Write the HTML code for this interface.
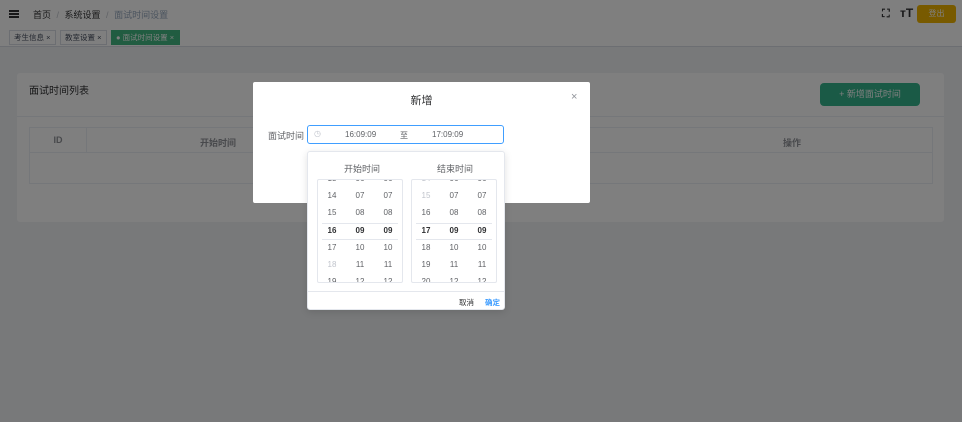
<!DOCTYPE html>
<html><head><meta charset="utf-8"><style>
*{margin:0;padding:0;box-sizing:border-box}
body{width:962px;height:422px;overflow:hidden;background:#f0f2f5;font-family:"Liberation Sans","Noto Sans CJK SC",sans-serif;position:relative;color:#303133}
.a{position:absolute}
.hdr{left:0;top:0;width:962px;height:29px;background:#fff;font-size:12px}
.tags{left:0;top:29px;width:962px;height:18px;background:#fff;border-bottom:1px solid #d8dce5}
.tag{top:1px;height:15px;border:1px solid #d8dce5;font-size:7.5px;line-height:13px;padding:0 4px;color:#495060;background:#fff}
.card{left:17px;top:73px;width:927px;height:149px;background:#fff;border-radius:3px}
.ov{left:0;top:0;width:962px;height:422px;background:rgba(0,0,0,.5)}
.dlg{left:253px;top:82px;width:337px;height:121px;background:#fff;border-radius:2px}
.pk{left:307px;top:151px;width:198px;height:159px;background:#fff;border:1px solid #e4e7ed;border-radius:3px;box-shadow:0 2px 8px rgba(0,0,0,.12)}
.col{top:27px;width:86px;height:104px;border:1px solid #e4e7ed;border-radius:2px;overflow:hidden;font-size:8px;color:#606266}
.col span{position:absolute;width:28px;text-align:center}
</style></head><body>
<div class="a hdr">
 <div class="a" style="left:9px;top:10px;width:10px;height:2px;background:#303133"></div>
 <div class="a" style="left:9px;top:13px;width:10px;height:2px;background:#303133"></div>
 <div class="a" style="left:9px;top:16px;width:10px;height:2px;background:#303133"></div>
 <div class="a" style="left:33px;top:8px;font-size:9px;color:#303133">首页 <span style="color:#c0c4cc;margin:0 3px">/</span> 系统设置 <span style="color:#c0c4cc;margin:0 3px">/</span> <span style="color:#97a8be">面试时间设置</span></div>
 <div class="a" style="left:882px;top:8px;font-size:11px;font-weight:bold">⛶</div>
 <div class="a" style="left:900px;top:6px;font-size:12px;font-weight:bold">тT</div>
 <div class="a" style="left:917px;top:5px;width:39px;height:18px;border-radius:3px;color:#fff;font-size:8px;text-align:center;line-height:18px;background:#f0b400">登出</div>
</div>
<div class="a tags">
 <div class="a tag" style="left:9px;width:47px">考生信息 ×</div>
 <div class="a tag" style="left:60px;width:47px">教室设置 ×</div>
 <div class="a tag" style="left:111px;width:69px;background:#42b983;border-color:#42b983;color:#fff">● 面试时间设置 ×</div>
</div>
<div class="a card">
 <div class="a" style="left:12px;top:9px;font-size:10px">面试时间列表</div>
 <div class="a" style="left:803px;top:10px;width:100px;height:23px;background:#35b58c;border-radius:4px;color:#fff;font-size:9px;text-align:center;line-height:23px">+ 新增面试时间</div>
 <div class="a" style="left:0;top:43px;width:927px;border-top:1px solid #ebeef5"></div>
 <div class="a" style="left:12px;top:54px;width:904px;height:57px;border:1px solid #ebeef5">
  <div class="a" style="left:0;top:0;width:902px;height:25px;border-bottom:1px solid #ebeef5;font-size:9px;font-weight:bold;color:#909399">
   <div class="a" style="left:0;top:0;width:57px;height:25px;border-right:1px solid #ebeef5;text-align:center;line-height:25px">ID</div>
   <div class="a" style="left:170px;top:8px">开始时间</div>
   <div class="a" style="left:753px;top:8px">操作</div>
  </div>
 </div>
</div>
<div class="a ov"></div>
<div class="a dlg">
 <div class="a" style="left:0;top:10px;width:337px;text-align:center;font-size:11px">新增</div>
 <div class="a" style="left:318px;top:9px;font-size:11px;color:#909399">×</div>
 <div class="a" style="left:15px;top:47px;font-size:9px;color:#606266">面试时间</div>
 <div class="a" style="left:54px;top:43px;width:197px;height:19px;border:1px solid #409eff;border-radius:3px;font-size:8px;color:#606266">
  <span class="a" style="left:6px;top:3px;color:#c0c4cc">◷</span>
  <span class="a" style="left:37px;top:4px">16:09:09</span>
  <span class="a" style="left:92px;top:4px">至</span>
  <span class="a" style="left:124px;top:4px">17:09:09</span>
 </div>
</div>
<div class="a pk">
 <div class="a" style="left:36px;top:10px;font-size:9px;color:#606266">开始时间</div>
 <div class="a" style="left:129px;top:10px;font-size:9px;color:#606266">结束时间</div>
 <div class="a col" style="left:9px">
  <div class="a" style="left:4px;top:43px;width:76px;height:17px;border-top:1px solid #e4e7ed;border-bottom:1px solid #e4e7ed"></div>
  <span style="left:0;top:-6px">13</span><span style="left:28px;top:-6px">06</span><span style="left:56px;top:-6px">06</span>
  <span style="left:0;top:11px">14</span><span style="left:28px;top:11px">07</span><span style="left:56px;top:11px">07</span>
  <span style="left:0;top:28px">15</span><span style="left:28px;top:28px">08</span><span style="left:56px;top:28px">08</span>
  <span style="left:0;top:46px;font-weight:bold;color:#303133">16</span><span style="left:28px;top:46px;font-weight:bold;color:#303133">09</span><span style="left:56px;top:46px;font-weight:bold;color:#303133">09</span>
  <span style="left:0;top:63px">17</span><span style="left:28px;top:63px">10</span><span style="left:56px;top:63px">10</span>
  <span style="left:0;top:80px;color:#c0c4cc">18</span><span style="left:28px;top:80px">11</span><span style="left:56px;top:80px">11</span>
  <span style="left:0;top:97px">19</span><span style="left:28px;top:97px">12</span><span style="left:56px;top:97px">12</span>
 </div>
 <div class="a col" style="left:103px">
  <div class="a" style="left:4px;top:43px;width:76px;height:17px;border-top:1px solid #e4e7ed;border-bottom:1px solid #e4e7ed"></div>
  <span style="left:0;top:-6px;color:#c0c4cc">14</span><span style="left:28px;top:-6px">06</span><span style="left:56px;top:-6px">06</span>
  <span style="left:0;top:11px;color:#c0c4cc">15</span><span style="left:28px;top:11px">07</span><span style="left:56px;top:11px">07</span>
  <span style="left:0;top:28px">16</span><span style="left:28px;top:28px">08</span><span style="left:56px;top:28px">08</span>
  <span style="left:0;top:46px;font-weight:bold;color:#303133">17</span><span style="left:28px;top:46px;font-weight:bold;color:#303133">09</span><span style="left:56px;top:46px;font-weight:bold;color:#303133">09</span>
  <span style="left:0;top:63px">18</span><span style="left:28px;top:63px">10</span><span style="left:56px;top:63px">10</span>
  <span style="left:0;top:80px">19</span><span style="left:28px;top:80px">11</span><span style="left:56px;top:80px">11</span>
  <span style="left:0;top:97px">20</span><span style="left:28px;top:97px">12</span><span style="left:56px;top:97px">12</span>
 </div>
 <div class="a" style="left:0;top:139px;width:196px;border-top:1px solid #e4e7ed"></div>
 <div class="a" style="left:151px;top:145px;font-size:7.5px;color:#303133">取消</div>
 <div class="a" style="left:177px;top:145px;font-size:7.5px;color:#409eff;font-weight:bold">确定</div>
</div>
</body></html>
